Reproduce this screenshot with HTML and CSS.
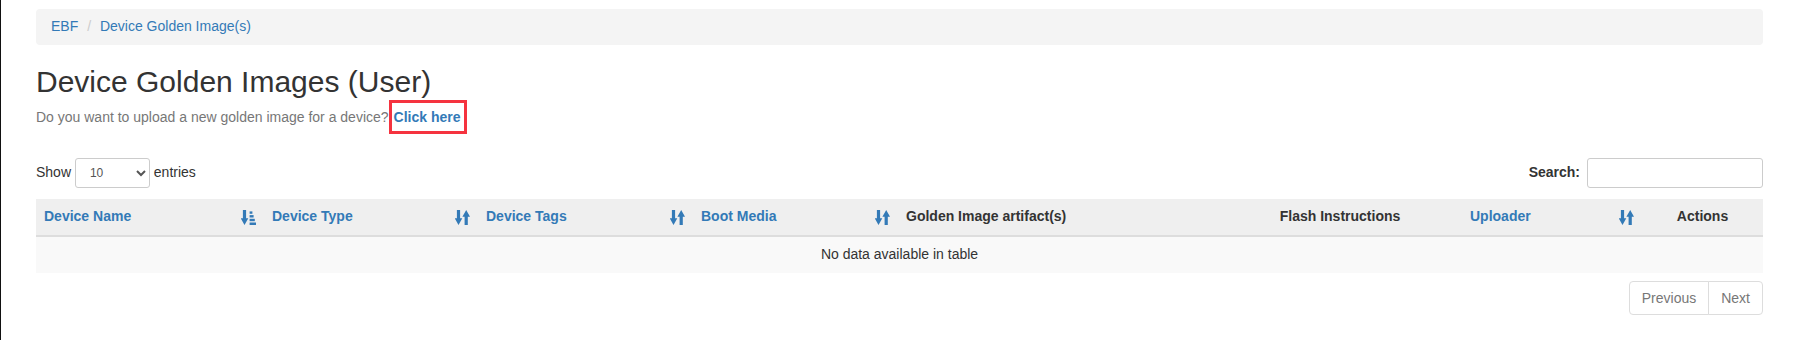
FILE: index.html
```html
<!DOCTYPE html>
<html lang="en">
	<head>
		<meta charset="utf-8"/>
		<title>Device Golden Images (User)</title>
		<link rel="stylesheet" href="styles.css">
	</head>
	<body>
		<div class="page">
			<ol class="breadcrumb">
				<li><a href="#">EBF</a></li>
				<li><a href="#">Device Golden Image(s)</a></li>
			</ol>

			<h2 class="title">Device Golden Images (User)</h2>
			<p class="note">Do you want to upload a new golden image for a device?<a class="upload-link" href="#">Click here</a></p>

			<div class="dt-top">
				<label class="dt-length">Show
					<select>
						<option>10</option>
						<option>25</option>
						<option>50</option>
						<option>100</option>
					</select>
					entries</label>
				<label class="dt-filter">Search:<input type="search"/></label>
			</div>

			<table class="dt">
				<colgroup>
					<col style="width: 228px">
					<col style="width: 214px">
					<col style="width: 215px">
					<col style="width: 205px">
					<col style="width: 320px">
					<col style="width: 244px">
					<col style="width: 180px">
					<col style="width: 121px">
				</colgroup>
				<thead>
					<tr>
						<th class="sortable"><div class="th-in"><span>Device Name</span>
							<svg class="sort-ico" viewBox="0 0 15 15" width="15" height="15"><path d="M1.9 0h3.2v8.2h2.2L3.5 15-.3 8.2h2.2z"/><rect x="8.6" y="1.4" width="2.8" height="2.4"/><rect x="8.6" y="5.1" width="4" height="2.4"/><rect x="8.6" y="8.8" width="5.2" height="2.4"/><rect x="8.6" y="12.5" width="6.4" height="2.5"/></svg></div></th>
						<th class="sortable"><div class="th-in"><span>Device Type</span>
							<svg class="sort-ico" viewBox="0 0 15 15" width="15" height="15"><path d="M1.9 0h3.2v8.2h2.2L3.5 15-.3 8.2h2.2z"/><path d="M9.6 15h3.2V6.8H15L11.2 0 7.4 6.8h2.2z"/></svg></div></th>
						<th class="sortable"><div class="th-in"><span>Device Tags</span>
							<svg class="sort-ico" viewBox="0 0 15 15" width="15" height="15"><path d="M1.9 0h3.2v8.2h2.2L3.5 15-.3 8.2h2.2z"/><path d="M9.6 15h3.2V6.8H15L11.2 0 7.4 6.8h2.2z"/></svg></div></th>
						<th class="sortable"><div class="th-in"><span>Boot Media</span>
							<svg class="sort-ico" viewBox="0 0 15 15" width="15" height="15"><path d="M1.9 0h3.2v8.2h2.2L3.5 15-.3 8.2h2.2z"/><path d="M9.6 15h3.2V6.8H15L11.2 0 7.4 6.8h2.2z"/></svg></div></th>
						<th>Golden Image artifact(s)</th>
						<th class="center">Flash Instructions</th>
						<th class="sortable"><div class="th-in"><span>Uploader</span>
							<svg class="sort-ico" viewBox="0 0 15 15" width="15" height="15"><path d="M1.9 0h3.2v8.2h2.2L3.5 15-.3 8.2h2.2z"/><path d="M9.6 15h3.2V6.8H15L11.2 0 7.4 6.8h2.2z"/></svg></div></th>
						<th class="center">Actions</th>
					</tr>
				</thead>
				<tbody>
					<tr class="odd">
						<td colspan="8" class="empty">No data available in table</td>
					</tr>
				</tbody>
			</table>

			<div class="dt-bottom">
				<ul class="pagination">
					<li class="disabled"><a href="#">Previous</a></li>
					<li class="disabled"><a href="#">Next</a></li>
				</ul>
			</div>
		</div>
	</body>
</html>
```

FILE: styles.css
```css
html, body {
	margin: 0;
	padding: 0;
	background: #fff;
	font-family: "Liberation Sans", Arial, sans-serif;
	font-size: 14px;
	line-height: 1.42857;
	color: #333;
}
a {
	color: #337ab7;
	text-decoration: none;
}
.page {
	min-height: 340px;
	box-sizing: border-box;
	border-left: 1px solid #111;
	padding: 9px 45px 0 35px;
}

/* breadcrumb */
.breadcrumb {
	margin: 0 0 20px 0;
	padding: 8px 15px;
	list-style: none;
	background: #f4f4f4;
	border-radius: 4px;
}
.breadcrumb li {
	display: inline-block;
}
.breadcrumb li + li:before {
	content: "/\00a0";
	padding: 0 5px;
	color: #ccc;
}

.title {
	margin: 20px 0 10px 0;
	font-size: 30px;
	font-weight: 500;
	line-height: 1.1;
	color: #333;
}
.note {
	margin: 0 0 10px 0;
	color: #777;
}
.upload-link {
	font-weight: 700;
	padding: 6px 3px 6px 2px;
	border: 3px solid #f5333f;
}

/* datatable top controls */
.dt-top {
	display: flex;
	justify-content: space-between;
	align-items: center;
	margin-top: 30px;
	height: 30px;
}
.dt-length {
	font-weight: 400;
}
.dt-length select {
	width: 75px;
	height: 30px;
	margin: 0;
	padding: 5px 6px 5px 10px;
	font-family: inherit;
	font-size: 12px;
	color: #555;
	background: #fff;
	border: 1px solid #ccc;
	border-radius: 3px;
}
.dt-filter {
	font-weight: 700;
}
.dt-filter input {
	width: 176px;
	height: 30px;
	box-sizing: border-box;
	margin-left: 7px;
	padding: 5px 10px;
	font-size: 12px;
	border: 1px solid #ccc;
	border-radius: 3px;
	vertical-align: middle;
	outline: none;
}

/* table */
.dt {
	width: 100%;
	margin-top: 11px;
	border-collapse: collapse;
	table-layout: fixed;
}
.dt thead th {
	padding: 8px;
	background: #efefef;
	border-bottom: 2px solid #ddd;
	text-align: left;
	font-weight: 700;
	color: #333;
	white-space: nowrap;
}
.dt thead th.sortable {
	color: #337ab7;
}
.dt thead th.center {
	text-align: center;
}
.th-in {
	display: flex;
	justify-content: space-between;
	align-items: center;
}
.sort-ico {
	fill: #337ab7;
	flex: none;
	margin-top: 1px;
}
.dt tbody td {
	padding: 8px;
}
.dt tbody tr.odd {
	background: #f9f9f9;
}
.dt td.empty {
	text-align: center;
}

/* pagination */
.dt-bottom {
	display: flex;
	justify-content: flex-end;
	margin-top: 8px;
}
.pagination {
	display: flex;
	margin: 0;
	padding: 0;
	list-style: none;
}
.pagination li a {
	display: block;
	padding: 6px 12px;
	border: 1px solid #ddd;
	background: #fff;
	line-height: 20px;
}
.pagination li + li a {
	margin-left: -1px;
}
.pagination li:first-child a {
	border-radius: 4px 0 0 4px;
}
.pagination li:last-child a {
	border-radius: 0 4px 4px 0;
}
.pagination li.disabled a {
	color: #777;
}
```
